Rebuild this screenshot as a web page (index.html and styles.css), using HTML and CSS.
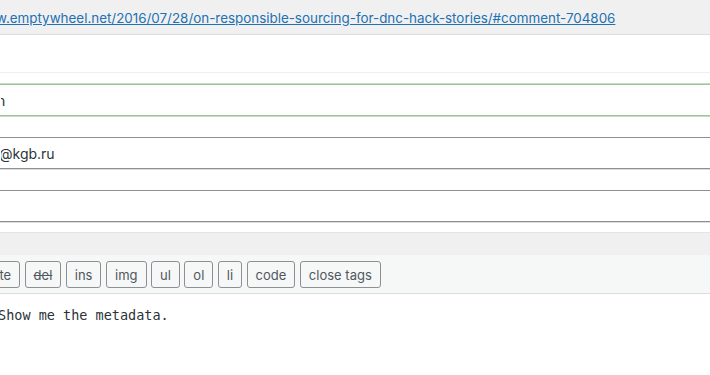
FILE: index.html
```html
<!DOCTYPE html>
<html lang="en">
<head>
    <meta charset="UTF-8">
    <meta name="viewport" content="width=device-width, initial-scale=1.0">
    <title>Edit Comment</title>
    <link rel="stylesheet" href="styles.css">
</head>
<body>
    <div class="permalink-bar">
        <a href="#">www.emptywheel.net/2016/07/28/on-responsible-sourcing-for-dnc-hack-stories/#comment-704806</a>
    </div>
    <div class="spacer"></div>

    <div class="fields">
        <input type="text" class="field field-name" value="n">
        <input type="email" class="field field-email" value="@kgb.ru">
        <input type="url" class="field" value="">
    </div>

    <div class="editor">
        <div class="editor-tabs"></div>
        <div class="quicktags">
            <button class="qt-first">b-quote</button>
            <button class="qt-del">del</button>
            <button>ins</button>
            <button>img</button>
            <button>ul</button>
            <button>ol</button>
            <button>li</button>
            <button>code</button>
            <button>close tags</button>
        </div>
        <textarea class="comment-text">Show me the metadata.</textarea>
    </div>
</body>
</html>
```

FILE: styles.css
```css
* {
    margin: 0;
    padding: 0;
    box-sizing: border-box;
}

body {
    background: #fff;
    font-family: Inter, "Liberation Sans", Arial, sans-serif;
    color: #2c3338;
    overflow: hidden;
}

.permalink-bar {
    height: 35px;
    background: #f0f0f1;
    border-bottom: 1px solid #dcdcde;
    padding-top: 7px;
    white-space: nowrap;
    overflow: hidden;
}

.permalink-bar a {
    display: inline-block;
    margin-left: -26px;
    font-size: 13.4px;
    line-height: 18px;
    color: #2271b1;
    text-decoration: underline;
}

.spacer {
    height: 38px;
    border-bottom: 1px solid #f0f0f1;
}

.fields {
    display: flex;
    flex-direction: column;
    gap: 21px;
    padding: 11px 0 10px;
}

.field {
    display: block;
    width: calc(100% + 80px);
    height: 32px;
    margin-left: -40px;
    padding: 0 8px 0 40px;
    border: 1px solid #8c8f94;
    border-radius: 4px;
    box-shadow: 0 1px 0 #dcdcde;
    font-family: Inter, "Liberation Sans", Arial, sans-serif;
    font-size: 14px;
    color: #2c3338;
    background: #fff;
}

.field-name {
    text-indent: -4px;
    border-color: #a3c39f;
    box-shadow: 0 1px 0 #c5dcc2, 0 -1px 0 #c5dcc2;
}

.field-email {
    text-indent: -2px;
}

.editor-tabs {
    height: 23px;
    background: #f0f0f1;
    border-top: 1px solid #e4e4e6;
}

.quicktags {
    display: flex;
    gap: 4.5px;
    height: 39px;
    padding-top: 6px;
    margin-left: -47px;
    background: #f6f7f7;
    border-bottom: 1px solid #dcdcde;
}

.quicktags button {
    height: 27px;
    padding: 0 8px;
    border: 1px solid #8c8f94;
    border-radius: 3px;
    background: #f6f7f7;
    color: #50575e;
    font-family: Inter, "Liberation Sans", Arial, sans-serif;
    font-size: 13px;
}

.quicktags .qt-del {
    text-decoration: line-through;
}

.comment-text {
    display: block;
    width: calc(100% + 80px);
    height: 90px;
    margin-left: -40px;
    padding: 12px 10px 0 38px;
    border: none;
    resize: none;
    font-family: "DejaVu Sans Mono", "Liberation Mono", monospace;
    font-size: 13.5px;
    line-height: 18px;
    color: #2c3338;
    background: #fff;
}
```
